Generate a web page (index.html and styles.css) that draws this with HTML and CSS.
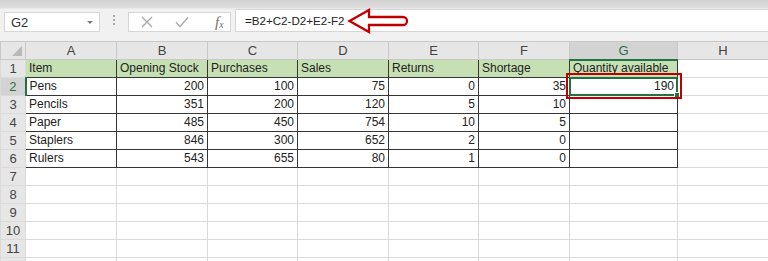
FILE: index.html
```html
<!DOCTYPE html>
<html lang="en">
    <head>
        <meta charset="UTF-8" />
        <meta name="viewport" content="width=device-width, initial-scale=1.0" />
        <title>Quantity available</title>
        <link rel="stylesheet" href="styles.css">
    </head>
    <body>
        <div class="formula-row">
            <div class="name-box">
                <span>G2</span>
                <span class="caret"></span>
            </div>
            <div class="grip"><i></i><i></i><i></i></div>
            <div class="fx-buttons">
                <svg class="btn-icon" width="12" height="12" viewBox="0 0 12 12">
                    <path d="M1 1 L11 11 M11 1 L1 11" stroke="#a8a8a8" stroke-width="1.3" fill="none" />
                </svg>
                <svg class="btn-icon" width="14" height="12" viewBox="0 0 14 12">
                    <path d="M1 6.5 L5 10.5 L13 1.5" stroke="#a8a8a8" stroke-width="1.4" fill="none" />
                </svg>
                <span class="fx"><i>f</i><sub>x</sub></span>
            </div>
            <div class="formula">
                <span class="formula-text">=B2+C2-D2+E2-F2</span>
                <svg class="arrow" width="64" height="26" viewBox="0 0 64 26">
                    <path d="M2.5 13 L22 2 L22 9 L56 9 A4 4 0 0 1 56 17 L22 17 L22 24 Z"
                        stroke="#c00000" stroke-width="2.3" fill="none" stroke-linejoin="miter" />
                </svg>
            </div>
        </div>

        <table class="sheet">
            <colgroup>
                <col class="c-rh" />
                <col class="c-std" />
                <col class="c-std" />
                <col class="c-narrow" />
                <col class="c-std" />
                <col class="c-narrow" />
                <col class="c-std" />
                <col class="c-wide" />
                <col class="c-std" />
            </colgroup>
            <tr class="col-heads">
                <th class="corner"><span class="tri"></span></th>
                <th>A</th><th>B</th><th>C</th><th>D</th><th>E</th><th>F</th>
                <th class="active">G</th><th>H</th>
            </tr>
            <tr class="title-row">
                <th class="rh">1</th>
                <td class="d">Item</td>
                <td class="d">Opening Stock</td>
                <td class="d">Purchases</td>
                <td class="d">Sales</td>
                <td class="d">Returns</td>
                <td class="d">Shortage</td>
                <td class="d">Quantity available</td>
                <td></td>
            </tr>
            <tr>
                <th class="rh active">2</th>
                <td class="d">Pens</td>
                <td class="d n">200</td>
                <td class="d n">100</td>
                <td class="d n">75</td>
                <td class="d n">0</td>
                <td class="d n">35</td>
                <td class="d n selected">190<span class="mark"></span><span class="handle"></span></td>
                <td></td>
            </tr>
            <tr>
                <th class="rh">3</th>
                <td class="d">Pencils</td>
                <td class="d n">351</td>
                <td class="d n">200</td>
                <td class="d n">120</td>
                <td class="d n">5</td>
                <td class="d n">10</td>
                <td class="d"></td>
                <td></td>
            </tr>
            <tr>
                <th class="rh">4</th>
                <td class="d">Paper</td>
                <td class="d n">485</td>
                <td class="d n">450</td>
                <td class="d n">754</td>
                <td class="d n">10</td>
                <td class="d n">5</td>
                <td class="d"></td>
                <td></td>
            </tr>
            <tr>
                <th class="rh">5</th>
                <td class="d">Staplers</td>
                <td class="d n">846</td>
                <td class="d n">300</td>
                <td class="d n">652</td>
                <td class="d n">2</td>
                <td class="d n">0</td>
                <td class="d"></td>
                <td></td>
            </tr>
            <tr>
                <th class="rh">6</th>
                <td class="d">Rulers</td>
                <td class="d n">543</td>
                <td class="d n">655</td>
                <td class="d n">80</td>
                <td class="d n">1</td>
                <td class="d n">0</td>
                <td class="d"></td>
                <td></td>
            </tr>
            <tr><th class="rh">7</th><td></td><td></td><td></td><td></td><td></td><td></td><td></td><td></td></tr>
            <tr><th class="rh">8</th><td></td><td></td><td></td><td></td><td></td><td></td><td></td><td></td></tr>
            <tr><th class="rh">9</th><td></td><td></td><td></td><td></td><td></td><td></td><td></td><td></td></tr>
            <tr><th class="rh">10</th><td></td><td></td><td></td><td></td><td></td><td></td><td></td><td></td></tr>
            <tr><th class="rh">11</th><td></td><td></td><td></td><td></td><td></td><td></td><td></td><td></td></tr>
            <tr><th class="rh"></th><td></td><td></td><td></td><td></td><td></td><td></td><td></td><td></td></tr>
        </table>
    </body>
</html>
```

FILE: styles.css
```css
* {
    box-sizing: border-box;
}
body {
    margin: 0;
    width: 768px;
    height: 261px;
    overflow: hidden;
    background: #ffffff;
    font-family: "Liberation Sans", Arial, sans-serif;
    font-size: 12px;
    color: #222222;
}

/* formula bar */
.formula-row {
    display: flex;
    align-items: flex-start;
    height: 41px;
    padding-left: 4px;
    background: linear-gradient(#d2d2d2 0, #dedede 8px, #f1f1f1 9px, #f1f1f1 100%);
}
.name-box {
    display: flex;
    align-items: center;
    justify-content: space-between;
    width: 96px;
    height: 20px;
    margin-top: 12px;
    padding: 0 6px 0 6px;
    background: #ffffff;
    border: 1px solid #d6d6d6;
    font-size: 13px;
    color: #333333;
}
.caret {
    width: 0;
    height: 0;
    border-left: 3px solid transparent;
    border-right: 3px solid transparent;
    border-top: 3px solid #7a7a7a;
}
.grip {
    display: flex;
    flex-direction: column;
    gap: 2px;
    width: 28px;
    margin-top: 15px;
    align-items: center;
}
.grip i {
    width: 2px;
    height: 2px;
    background: #a9a9a9;
}
.fx-buttons {
    display: flex;
    align-items: center;
    width: 103px;
    height: 20px;
    margin-top: 12px;
    padding-left: 12px;
    background: #ffffff;
    border: 1px solid #d6d6d6;
}
.btn-icon {
    margin-right: 22px;
}
.btn-icon + .btn-icon {
    margin-right: 26px;
}
.fx {
    font-family: "Liberation Serif", "Times New Roman", serif;
    font-size: 15px;
    color: #6f6f6f;
    line-height: 1;
}
.fx sub {
    font-size: 10px;
    font-style: italic;
    vertical-align: -1px;
}
.formula {
    display: flex;
    align-items: center;
    flex: 1;
    height: 23px;
    margin-top: 9px;
    margin-left: 4px;
    padding-left: 9px;
    background: #ffffff;
    border: 1px solid #d6d6d6;
    border-right: none;
    font-size: 11.6px;
    color: #222222;
}
.arrow {
    margin-left: 2px;
    margin-top: 1px;
}

/* grid */
.sheet {
    border-collapse: collapse;
    table-layout: fixed;
    width: 768px;
}
.c-rh {
    width: 25px;
}
.c-std {
    width: 91px;
}
.c-narrow {
    width: 90px;
}
.c-wide {
    width: 108px;
}
.sheet tr {
    height: 18px;
}
.sheet td,
.sheet th {
    height: 18px;
    padding: 0 3px 1px 3px;
    border: 1px solid #dadada;
    white-space: nowrap;
    overflow: hidden;
    vertical-align: bottom;
    line-height: 15px;
}
.col-heads th {
    background: #e6e6e6;
    border-color: #c8c8c8;
    font-weight: normal;
    color: #444444;
    text-align: center;
    font-size: 13px;
}
.col-heads th.active {
    background: #d3d3d3;
    color: #217346;
    border-bottom: 2px solid #217346;
}
.corner {
    position: relative;
}
.tri {
    position: absolute;
    right: 3px;
    bottom: 3px;
    width: 0;
    height: 0;
    border-left: 10px solid transparent;
    border-bottom: 10px solid #b9b9b9;
}
.rh {
    background: #e6e6e6;
    border-color: #c8c8c8;
    font-weight: normal;
    color: #444444;
    text-align: center;
    font-size: 13px;
    padding: 0 0 1px 0;
}
.rh.active {
    background: #d3d3d3;
    color: #217346;
    border-right: 2px solid #217346;
}
.sheet td.d {
    border: 1px solid #363636;
}
.title-row td.d {
    background: #c6e0b4;
}
.n {
    text-align: right;
}
.selected {
    position: relative;
    overflow: visible !important;
}
.selected::after {
    content: "";
    position: absolute;
    left: -1px;
    top: -1px;
    right: -1px;
    bottom: -1px;
    border: 2px solid #217346;
}
.handle {
    position: absolute;
    right: -3px;
    bottom: -3px;
    width: 6px;
    height: 6px;
    background: #217346;
    border: 1px solid #ffffff;
    z-index: 2;
}
.mark {
    position: absolute;
    left: -4px;
    right: -5px;
    top: -5px;
    bottom: -4px;
    border: 2px solid #c00000;
    z-index: 3;
}
```
